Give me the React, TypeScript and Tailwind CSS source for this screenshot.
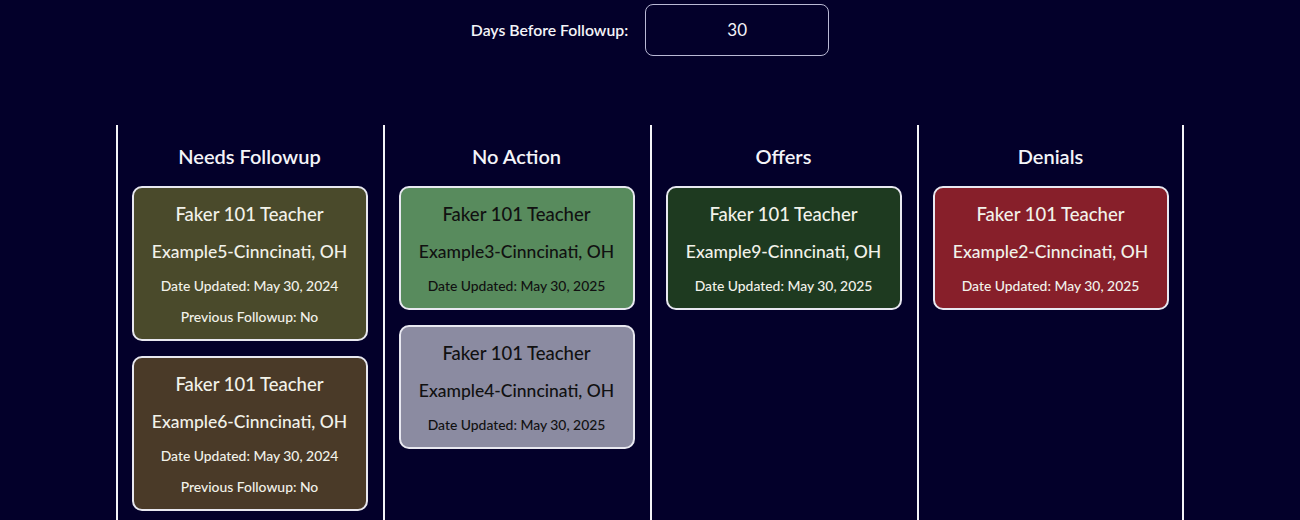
import React from "react";

type Job = {
  title: string;
  place: string;
  updated: string;
  followup?: string;
  tone: "olive" | "brown" | "sage" | "slate" | "forest" | "crimson";
};

const toneClass = {
  olive: "bg-[#4a4a2b] text-[#f2f2ea]",
  brown: "bg-[#4a3a28] text-[#f2f2ea]",
  sage: "bg-[#588b5d] text-[#111111]",
  slate: "bg-[#8b8ba1] text-[#111111]",
  forest: "bg-[#1e3a20] text-[#f2f2ea]",
  crimson: "bg-[#871f2a] text-[#f2f2ea]",
} as const;

const columns: { name: string; jobs: Job[] }[] = [
  {
    name: "Needs Followup",
    jobs: [
      { title: "Faker 101 Teacher", place: "Example5-Cinncinati, OH", updated: "May 30, 2024", followup: "No", tone: "olive" },
      { title: "Faker 101 Teacher", place: "Example6-Cinncinati, OH", updated: "May 30, 2024", followup: "No", tone: "brown" },
    ],
  },
  {
    name: "No Action",
    jobs: [
      { title: "Faker 101 Teacher", place: "Example3-Cinncinati, OH", updated: "May 30, 2025", tone: "sage" },
      { title: "Faker 101 Teacher", place: "Example4-Cinncinati, OH", updated: "May 30, 2025", tone: "slate" },
    ],
  },
  {
    name: "Offers",
    jobs: [{ title: "Faker 101 Teacher", place: "Example9-Cinncinati, OH", updated: "May 30, 2025", tone: "forest" }],
  },
  {
    name: "Denials",
    jobs: [{ title: "Faker 101 Teacher", place: "Example2-Cinncinati, OH", updated: "May 30, 2025", tone: "crimson" }],
  },
];

function JobCard({ job }: { job: Job }) {
  return (
    <div
      className={`flex w-[236px] flex-col items-center rounded-[10px] border-2 border-[#e8e8f0] pt-[12px] pb-[12px] text-center font-medium ${toneClass[job.tone]}`}
    >
      <p className="text-[18.5px] leading-[28px]">{job.title}</p>
      <p className="mt-[11px] text-[17.5px] leading-[26px]">{job.place}</p>
      <p className="mt-[11px] text-[13.9px] leading-[20px]">Date Updated: {job.updated}</p>
      {job.followup && (
        <p className="mt-[11px] text-[13.9px] leading-[20px]">Previous Followup: {job.followup}</p>
      )}
    </div>
  );
}

export default function App() {
  return (
    <div
      className="h-[520px] overflow-hidden bg-[#03002a] text-[#f4f4f8]"
      style={{ fontFamily: "Lato, 'Liberation Sans', sans-serif" }}
    >
      <div className="flex items-center justify-center gap-[17px] pt-[4px]">
        <label className="text-[15.8px] font-semibold">Days Before Followup:</label>
        <div className="flex h-[52px] w-[184px] items-center justify-center rounded-[8px] border border-[#b9b9d4] text-[17px]">
          30
        </div>
      </div>

      <div className="mx-auto mt-[69px] grid w-[1068px] grid-cols-[repeat(4,267px)]">
        {columns.map((col, i) => (
          <div
            key={col.name}
            className={`flex h-[400px] flex-col items-center gap-[15px] border-l-2 border-[#f4f4f8] pt-[17px] ${i === 3 ? "border-r-2" : "pr-[2px]"}`}
          >
            <h3 className="mb-[1px] text-[20px] font-semibold leading-[28px]">{col.name}</h3>
            {col.jobs.map((job, j) => (
              <JobCard key={j} job={job} />
            ))}
          </div>
        ))}
      </div>
    </div>
  );
}
